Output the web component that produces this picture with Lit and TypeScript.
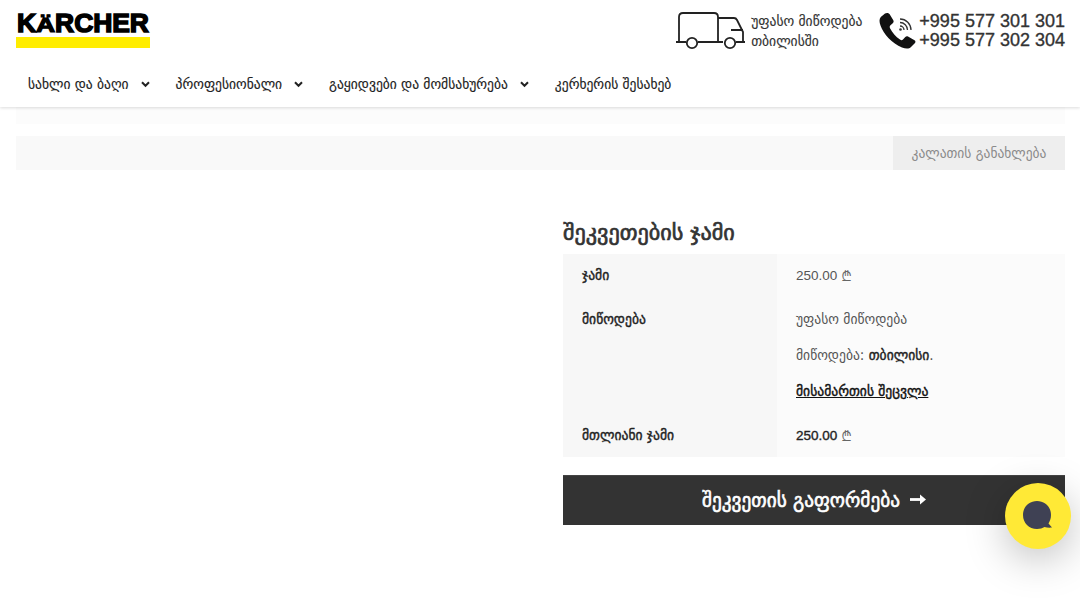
import { LitElement, html, css } from "lit";
import { customElement } from "lit/decorators.js";

const chevron = html`<svg class="chev" width="9" height="7" viewBox="0 0 9 7"><path d="M1 1.2 L4.5 4.8 L8 1.2" fill="none" stroke="#222" stroke-width="2"/></svg>`;

@customElement("app-root")
export class AppRoot extends LitElement {
  static styles = css`
    :host { display: block; width: 1080px; height: 607px; overflow: hidden; position: relative; background: #fff;
      font-family: "DejaVu Sans", "Noto Sans", sans-serif; color: #333; }
    * { box-sizing: border-box; }
    header { height: 107px; box-shadow: 0 1px 3px rgba(0,0,0,.14); padding: 0 15px 0 16px; position: relative; background: #fff; }
    .top { display: flex; justify-content: space-between; height: 62px; padding-top: 12px; }
    .logo { width: 134px; display: flex; flex-direction: column; }
    .logo-text { font: 900 26.5px/21px "Liberation Sans", sans-serif; color: #000; -webkit-text-stroke: 1.5px #000; height: 25px; padding: 1px 0 0 1px; white-space: nowrap; letter-spacing: -.1px; }
    .logo-text span { display: inline-block; transform: scaleY(.79); transform-origin: 50% 17.5px; }
    .logo-bar { height: 11px; background: #ffed00; }
    .contact { display: flex; align-items: center; height: 38px; }
    .truck { flex: none; }
    .ship { font-size: 13.6px; line-height: 20px; color: #333; margin: 0 17px 0 5px; white-space: nowrap; -webkit-text-stroke: .15px #333; }
    .phones { font: 18px/19px "Liberation Sans", sans-serif; color: #333; margin-left: 3px; white-space: nowrap; -webkit-text-stroke: .35px #333; }
    nav { display: flex; padding-left: 12px; height: 44px; align-items: center; font-size: 13.55px; color: #222; -webkit-text-stroke: .15px #222; }
    nav a { display: flex; align-items: center; white-space: nowrap; }
    nav a.sub { margin-right: 26px; }
    .chev { margin-left: 12px; }
    .strip { height: 17px; margin: 0 15px 0 16px; background: #fcfcfc; }
    .cart-bar { height: 34px; margin: 12px 15px 0 16px; background: #f9f9f9; display: flex; justify-content: flex-end; }
    .update { width: 172px; background: #eee; color: #8a8a8a; font-size: 13.5px; display: flex; align-items: center; justify-content: center; }
    .totals { width: 502px; margin: 50px 15px 0 auto; }
    h2 { margin: 0; font-size: 22.2px; line-height: 24px; font-weight: 400; -webkit-text-stroke: .7px #333; color: #333; height: 34px; white-space: nowrap; }
    .table { display: grid; grid-template-columns: 214px 288px; font-size: 13.6px; }
    .th { background: #f7f7f7; padding: 0 19px; color: #222; font-size: 13.6px; -webkit-text-stroke: .4px #222; }
    .td { background: #fbfbfb; padding: 0 19px; color: #555; }
    .r1 { height: 43px; display: flex; align-items: center; padding-bottom: 1px; }
    .r2 { height: 117px; padding-top: 13px; }
    .r3 { height: 43px; display: flex; align-items: center; padding-bottom: 1px; }
    .r2.td p { margin: 0 0 18px; line-height: 18px; white-space: nowrap; }
    .r2.th { line-height: 18px; }
    .td b { color: #222; font-weight: 400; -webkit-text-stroke: .4px #222; }
    .td a { color: #111; font-weight: 400; -webkit-text-stroke: .4px #111; text-decoration: underline; }
    .num { font: 13.5px "Liberation Sans", sans-serif; }
    .td b.num { font: 400 13.5px "Liberation Sans", sans-serif; -webkit-text-stroke: .35px #222; }
    .cur { font: 300 15px "Inter", "Noto Sans", sans-serif; margin-left: 4px; color: #666; }
    .checkout { margin-top: 18px; height: 50px; background: #333; border-top: 1px solid #444; color: #fff; font-size: 19.3px; font-weight: 400; -webkit-text-stroke: .6px #fff; display: flex; align-items: center; justify-content: center; gap: 10px; white-space: nowrap; }
    .checkout svg { margin-top: -2px; }
    .chat { position: absolute; left: 1005px; top: 483px; width: 66px; height: 66px; border-radius: 50%; background: #ffe936; box-shadow: 0 10px 40px rgba(0,0,0,.25); display: flex; align-items: center; justify-content: center; }
  `;
  render() {
    return html`
      <header>
        <div class="top">
          <div class="logo"><div class="logo-text">K<span>Ä</span>RCHER</div><div class="logo-bar"></div></div>
          <div class="contact">
            <svg class="truck" width="70" height="38" viewBox="0 0 70 38" fill="none" stroke="#222" stroke-width="1.8">
              <path d="M0 30 H10 M22 30 H47 M3 30 V5 Q3 1 7 1 H38 Q42 1 42 5 V30 M42 6 H58 Q60 6 61 8 L67 20 V30 H69 M55 18 H67 M60 30 H67" />
              <circle cx="16" cy="31" r="5.2"/><circle cx="54" cy="31" r="5.2"/>
            </svg>
            <div class="ship">უფასო მიწოდება<br>თბილისში</div>
            <svg width="37" height="38" viewBox="0 0 37 38">
              <path fill="#111" d="M6 1.5 L1.8 5 C0 7 .3 10 1.5 13.5 C4.5 22 13 31.5 23 35.5 C27 37 30 37 32 35 L36 31 C36.8 30 36.5 29 35.5 28.3 L29 24.5 C28 24 27 24.2 26.3 25 L24 27.6 C23 28.5 22 28.3 21 27.6 C16.5 24.5 13.5 21 11 16.2 C10.5 15 10.7 14 11.5 13.3 L14 11 C14.8 10.3 14.8 9.3 14.3 8.3 L10.5 2 C9.6 .8 7.5 .5 6 1.5 Z"/>
              <g fill="none" stroke="#333" stroke-width="1.3"><path d="M21 14 A4 4 0 0 1 25 18"/><path d="M21 10.5 A7.5 7.5 0 0 1 28.5 18"/><path d="M21 7 A11 11 0 0 1 32 18"/></g>
              <circle cx="21.5" cy="17.5" r="1.3" fill="#333"/>
            </svg>
            <div class="phones">+995 577 301 301<br>+995 577 302 304</div>
          </div>
        </div>
        <nav>
          <a class="sub">სახლი და ბაღი ${chevron}</a>
          <a class="sub">პროფესიონალი ${chevron}</a>
          <a class="sub">გაყიდვები და მომსახურება ${chevron}</a>
          <a>კერხერის შესახებ</a>
        </nav>
      </header>
      <div class="strip"></div>
      <div class="cart-bar"><div class="update">კალათის განახლება</div></div>
      <section class="totals">
        <h2>შეკვეთების ჯამი</h2>
        <div class="table">
          <div class="th r1">ჯამი</div>
          <div class="td r1"><span class="num">250.00</span><span class="cur">₾</span></div>
          <div class="th r2">მიწოდება</div>
          <div class="td r2">
            <p>უფასო მიწოდება</p>
            <p>მიწოდება: <b>თბილისი</b>.</p>
            <p><a>მისამართის შეცვლა</a></p>
          </div>
          <div class="th r3">მთლიანი ჯამი</div>
          <div class="td r3"><b class="num">250.00</b><span class="cur">₾</span></div>
        </div>
        <div class="checkout">შეკვეთის გაფორმება
          <svg width="16" height="11" viewBox="0 0 16 11"><path d="M0 5.5 H12" stroke="#fff" stroke-width="2.8"/><path d="M10 .5 L16 5.5 L10 10.5 Z" fill="#fff"/></svg>
        </div>
      </section>
      <div class="chat">
        <svg width="32" height="32" viewBox="0 0 32 32"><path fill="#3f4154" d="M15 1 C23 1 29 7 29 15 C29 18.5 28 21 26.5 23.4 L30 27.6 C27 28 24.5 27.6 22.5 27 C20.5 28.3 18 29 15 29 C7 29 1 23 1 15 C1 7 7 1 15 1 Z"/></svg>
      </div>
    `;
  }
}
